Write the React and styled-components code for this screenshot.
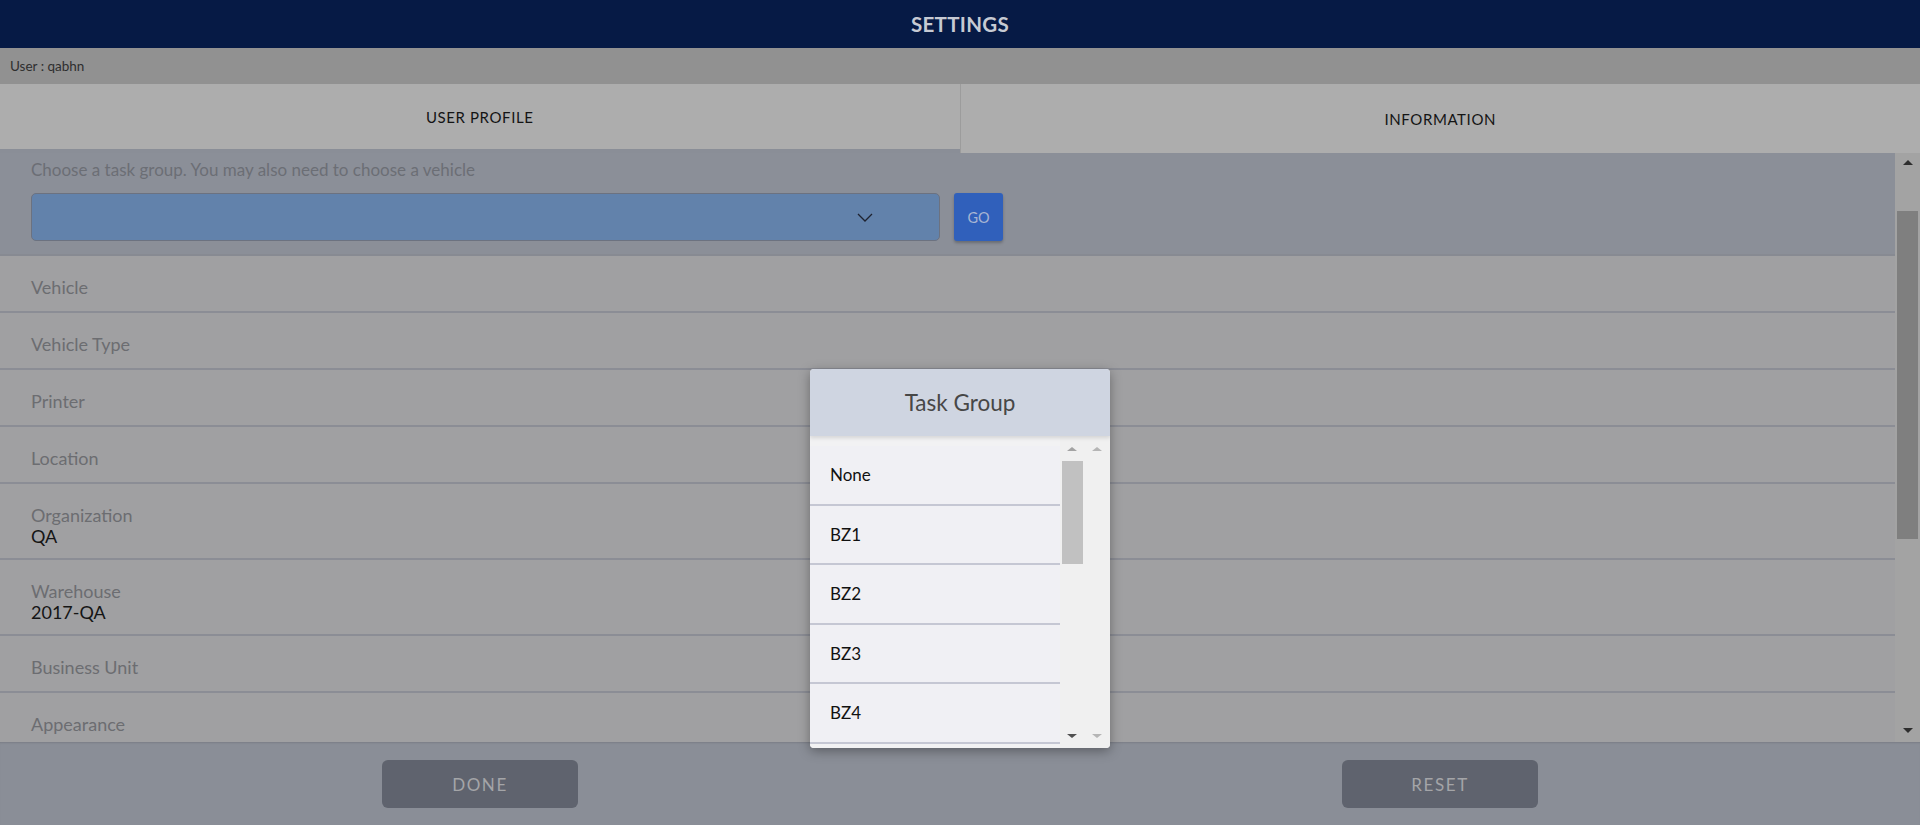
import React from "react";
import styled, { createGlobalStyle } from "styled-components";

const GlobalStyle = createGlobalStyle`
  html, body { margin: 0; padding: 0; }
  body { font-family: Lato, "Liberation Sans", sans-serif; overflow: hidden; }
  * { box-sizing: border-box; }
`;

const Page = styled.div`
  position: relative;
  width: 1920px;
  height: 825px;
  display: flex;
  flex-direction: column;
  overflow: hidden;
`;

const Header = styled.header`
  height: 48px;
  flex: none;
  background: #061a45;
  color: #c6cad3;
  display: flex;
  align-items: center;
  justify-content: center;
  font-size: 20.5px;
  font-weight: 700;
  letter-spacing: 0.3px;
`;

const UserBar = styled.div`
  height: 36px;
  flex: none;
  background: #919191;
  color: #2e2e2e;
  font-size: 13.5px;
  display: flex;
  align-items: center;
  padding-left: 10px;
`;

const Tabs = styled.div`
  height: 69px;
  flex: none;
  display: flex;
  background: #8a8e97;
`;

const Tab = styled.div`
  flex: 1;
  height: ${(p) => (p.$active ? "65px" : "69px")};
  background: #adadad;
  display: flex;
  align-items: center;
  justify-content: center;
  font-size: 15px;
  letter-spacing: 0.6px;
  color: #141414;
  & + & { border-left: 1px solid #9c9c9c; }
`;

const Content = styled.div`
  flex: 1;
  display: flex;
  min-height: 0;
`;

const ScrollArea = styled.div`
  flex: 1;
  overflow: hidden;
`;

const TaskPanel = styled.div`
  background: #8b8f98;
  border-bottom: 2px solid #878a92;
  padding: 6px 31px 13px;
  display: flex;
  flex-direction: column;
  gap: 13px;
`;

const Hint = styled.div`
  color: #6b6e75;
  font-size: 17px;
  line-height: 21px;
`;

const SelectRow = styled.div`
  display: flex;
  gap: 14px;
  align-items: center;
`;

const SelectBox = styled.div`
  width: 909px;
  height: 48px;
  background: #6282ab;
  border: 1px solid #6c7280;
  border-radius: 5px;
  display: flex;
  align-items: center;
  justify-content: flex-end;
  padding-right: 66px;
`;

const GoButton = styled.div`
  width: 49px;
  height: 48px;
  background: #3060bb;
  color: #a7b5d3;
  border-radius: 3px;
  font-size: 14.5px;
  display: flex;
  align-items: center;
  justify-content: center;
  box-shadow: 0 2px 3px rgba(0, 0, 0, 0.25);
`;

const Row = styled.div`
  min-height: 57px;
  background: #a0a0a2;
  border-bottom: 2px solid #8b8d95;
  padding: 21px 31px 11px;
  display: flex;
  flex-direction: column;
`;

const Label = styled.div`
  color: #6c6d71;
  font-size: 18px;
  line-height: 21px;
`;

const Value = styled.div`
  color: #151515;
  font-size: 18px;
  line-height: 21px;
`;

const Track = styled.div`
  width: ${(p) => p.$w}px;
  flex: none;
  background: ${(p) => p.$bg};
  display: flex;
  flex-direction: column;
  align-items: center;
  justify-content: space-between;
  padding: ${(p) => p.$pad};
  position: relative;
`;

const Thumb = styled.div`
  position: absolute;
  left: ${(p) => p.$left}px;
  right: ${(p) => p.$right}px;
  top: ${(p) => p.$top}px;
  height: ${(p) => p.$h}px;
  background: ${(p) => p.$bg};
`;

const Arrow = styled.div`
  width: 0;
  height: 0;
  border-left: ${(p) => p.$size}px solid transparent;
  border-right: ${(p) => p.$size}px solid transparent;
  ${(p) =>
    p.$up
      ? `border-bottom: ${p.$h}px solid ${p.$color};`
      : `border-top: ${p.$h}px solid ${p.$color};`}
`;

const Footer = styled.footer`
  height: 83px;
  flex: none;
  background: #8a8e97;
  box-shadow: inset 0 2px 2px -1px rgba(0, 0, 0, 0.12);
  display: grid;
  grid-template-columns: 1fr 1fr;
  align-items: start;
  justify-items: center;
  padding-top: 18px;
`;

const FooterButton = styled.div`
  width: 196px;
  height: 48px;
  background: #5f636e;
  border-radius: 6px;
  color: #a4a5a8;
  font-size: 17px;
  letter-spacing: 1.6px;
  display: flex;
  align-items: center;
  justify-content: center;
`;

const Modal = styled.div`
  position: absolute;
  left: 810px;
  top: 369px;
  width: 300px;
  height: 379px;
  border-radius: 4px;
  overflow: hidden;
  background: #f0f0f0;
  box-shadow: 0 3px 12px rgba(0, 0, 0, 0.35);
  display: flex;
  flex-direction: column;
`;

const ModalHeader = styled.div`
  height: 67px;
  flex: none;
  background: #cfd5e1;
  color: #474747;
  font-size: 22.5px;
  display: flex;
  align-items: center;
  justify-content: center;
  position: relative;
  z-index: 1;
  box-shadow: 0 2px 4px rgba(0, 0, 0, 0.12);
`;

const ModalBody = styled.div`
  flex: 1;
  display: flex;
  min-height: 0;
`;

const List = styled.div`
  width: 250px;
  flex: none;
  overflow: hidden;
  background: #f2f2f3;
  padding-top: 10px;
`;

const Item = styled.div`
  height: 59.5px;
  background: #f0f0f4;
  border-bottom: 2px solid #c5c7d3;
  padding-left: 20px;
  display: flex;
  align-items: center;
  color: #111;
  font-size: 17px;
`;

const rows = [
  { label: "Vehicle" },
  { label: "Vehicle Type" },
  { label: "Printer" },
  { label: "Location" },
  { label: "Organization", value: "QA" },
  { label: "Warehouse", value: "2017-QA" },
  { label: "Business Unit" },
  { label: "Appearance" },
];

const items = ["None", "BZ1", "BZ2", "BZ3", "BZ4"];

export default function App() {
  return (
    <Page>
      <GlobalStyle />
      <Header>SETTINGS</Header>
      <UserBar>User : qabhn</UserBar>
      <Tabs>
        <Tab $active>USER PROFILE</Tab>
        <Tab>INFORMATION</Tab>
      </Tabs>
      <Content>
        <ScrollArea>
          <TaskPanel>
            <Hint>Choose a task group. You may also need to choose a vehicle</Hint>
            <SelectRow>
              <SelectBox>
                <svg width="16" height="9" viewBox="0 0 16 9">
                  <path d="M1 1 L8 8 L15 1" fill="none" stroke="#1e2230" strokeWidth="1.3" />
                </svg>
              </SelectBox>
              <GoButton>GO</GoButton>
            </SelectRow>
          </TaskPanel>
          {rows.map((r) => (
            <Row key={r.label}>
              <Label>{r.label}</Label>
              {r.value && <Value>{r.value}</Value>}
            </Row>
          ))}
        </ScrollArea>
        <Track $w={25} $bg="#a3a3a3" $pad="7px 0 9px">
          <Arrow $up $size={5} $h={5} $color="#2e2e2e" />
          <Thumb $left={2} $right={2} $top={58} $h={328} $bg="#7f7f7f" />
          <Arrow $size={5} $h={5} $color="#2e2e2e" />
        </Track>
      </Content>
      <Footer>
        <FooterButton>DONE</FooterButton>
        <FooterButton>RESET</FooterButton>
      </Footer>
      <Modal>
        <ModalHeader>Task Group</ModalHeader>
        <ModalBody>
          <List>
            {items.map((it) => (
              <Item key={it}>{it}</Item>
            ))}
          </List>
          <Track $w={23} $bg="#f0f0f0" $pad="11px 0 10px">
            <Arrow $up $size={5} $h={4} $color="#a3a3a3" />
            <Thumb $left={2} $right={0} $top={25} $h={103} $bg="#c1c1c1" />
            <Arrow $size={5} $h={4} $color="#505050" />
          </Track>
          <Track $w={27} $bg="#f0f0f0" $pad="11px 0 10px">
            <Arrow $up $size={5} $h={4} $color="#b5b5b5" />
            <Arrow $size={5} $h={4} $color="#b5b5b5" />
          </Track>
        </ModalBody>
      </Modal>
    </Page>
  );
}
